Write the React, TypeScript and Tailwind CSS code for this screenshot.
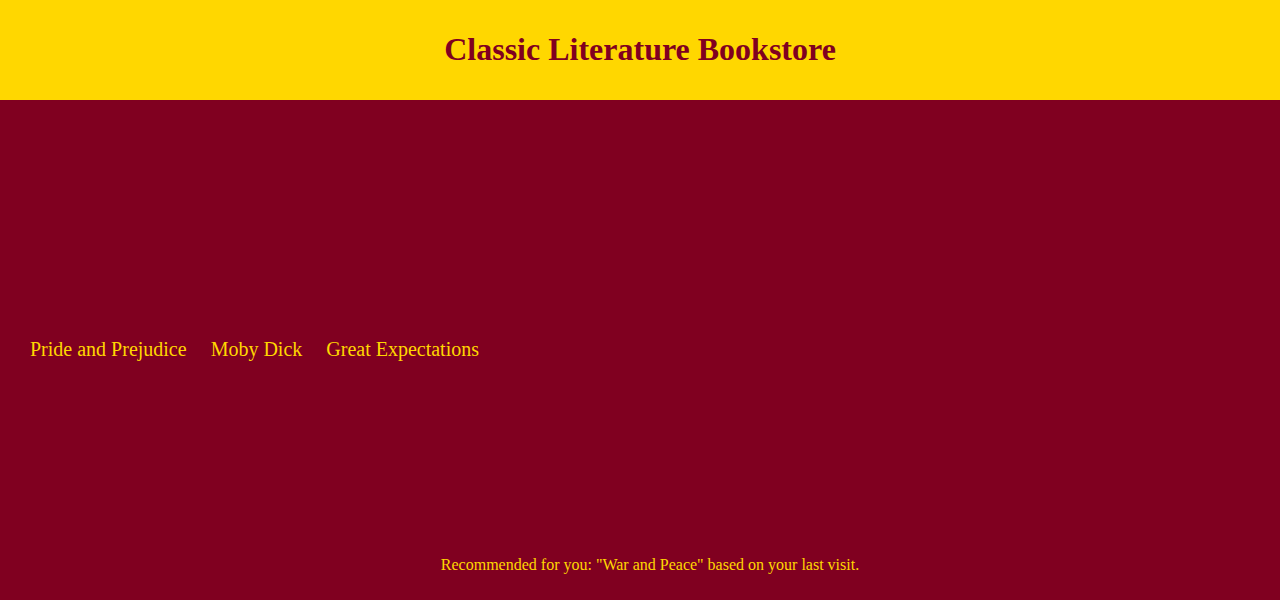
export default function App() {
  const books = ["Pride and Prejudice", "Moby Dick", "Great Expectations"];

  return (
    <div className="min-h-screen flex flex-col bg-[#800020] font-['Liberation_Serif',serif]">
      <header className="h-[100px] bg-[#FFD700] flex items-center justify-center pb-[2px]">
        <h1 className="text-[32px] font-bold text-[#800020] leading-[37px]">
          Classic Literature Bookstore
        </h1>
      </header>

      <main className="flex-1 px-[30px] pt-[238px]">
        <nav className="flex gap-6 text-[20px] leading-[23px] text-[#FFD700]">
          {books.map((b) => (
            <a key={b} href="#">
              {b}
            </a>
          ))}
        </nav>
      </main>

      <footer className="h-[60px] pt-4 pl-5 text-center text-base leading-[18px] text-[#FFD700]">
        Recommended for you: "War and Peace" based on your last visit.
      </footer>
    </div>
  );
}
